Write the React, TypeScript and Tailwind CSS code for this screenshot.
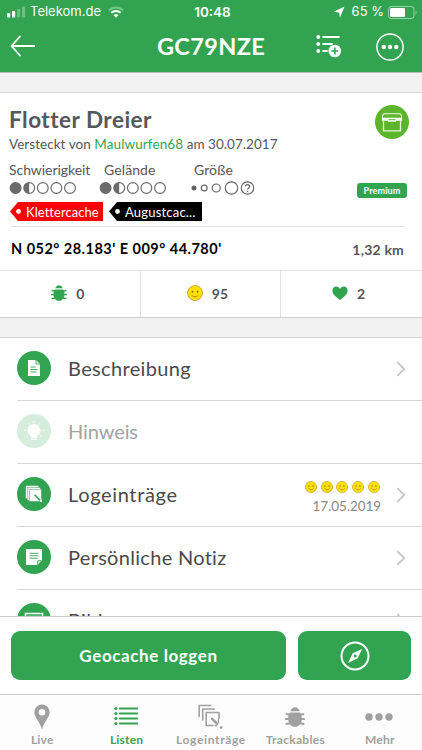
import React from 'react';

const Smiley = ({ size }: { size: number }) => (
  <svg width={size} height={size} viewBox="0 0 16 16" className="shrink-0">
    <circle cx="8" cy="8" r="7.4" fill="#ffe100" stroke="#c9a63a" strokeWidth="1" />
    <circle cx="5.4" cy="6.7" r="0.95" fill="#8a6d10" />
    <circle cx="10.6" cy="6.7" r="0.95" fill="#8a6d10" />
    <path d="M4.4 9.8c1.6 2.6 5.6 2.6 7.2 0" fill="none" stroke="#a88412" strokeWidth="0.9" />
  </svg>
);

const Bug = ({ size }: { size: number }) => (
  <svg width={size} height={size} viewBox="0 0 20 20" fill="currentColor" className="shrink-0">
    <path d="M5.4 4.2C6.2 1.6 7.8.3 10 .3s3.800 1.300 4.600 3.900z" />
    <path d="M5 5.600h10c1.400 1.500 1.800 3.400 1.800 5.900 0 5-2.800 8.300-6.800 8.300s-6.800-3.300-6.800-8.300c0-2.500.4-4.400 1.800-5.900z" />
    <path
      d="M1.500 7l2 .5h13l2-.5M.8 12h18.400M1.500 17l2-.5h13l2 .5"
      fill="none"
      stroke="currentColor"
      strokeWidth="1.900"
      strokeLinecap="round"
    />
  </svg>
);

const Rating = ({ value }: { value: number }) => (
  <svg width="68" height="14" viewBox="0 0 68 14">
    {[0, 1, 2, 3, 4].map((i) => {
      const cx = 6.6 + i * 13.6;
      return (
        <g key={i}>
          <circle
            cx={cx}
            cy="7"
            r="5.400"
            fill={value >= i + 1 ? '#6b6b6b' : 'none'}
            stroke="#6b6b6b"
            strokeWidth="1.200"
          />
          {value === i + 0.5 && <path d={`M${cx} 1.600a5.400 5.400 0 0 0 0 10.800z`} fill="#6b6b6b" />}
        </g>
      );
    })}
  </svg>
);

const Tag = ({ color, children }: { color: string; children: React.ReactNode }) => (
  <div className="relative flex h-[19px] w-[93px] items-center">
    <svg width="93" height="19" viewBox="0 0 93 19" className="absolute inset-0">
      <path d="M0 9.500L8 0H93V19H8z" fill={color} />
      <circle cx="8.500" cy="9.500" r="2.400" fill="#fff" />
    </svg>
    {children}
  </div>
);

const Chevron = () => (
  <svg width="10" height="16" viewBox="0 0 10 16" className="shrink-0">
    <path d="M1.200 1.200L8.200 8l-7 6.800" fill="none" stroke="#c4c4c9" strokeWidth="1.800" />
  </svg>
);

const DocIcon = () => (
  <svg width="34" height="34" viewBox="0 0 34 34">
    <path d="M11 9h8l4 4v12H11z" fill="#fff" />
    <path d="M19 9v4h4M13.500 16h5M13.500 18.500h7M13.500 21h6" fill="none" stroke="#32a451" strokeWidth="0.900" />
  </svg>
);

const BulbIcon = () => (
  <svg width="34" height="34" viewBox="0 0 34 34">
    <path
      d="M17 10.300a6.300 6.300 0 0 1 3.900 11.300c-.8.700-1 1.200-1 2.400v2h-5.800v-2c0-1.200-.2-1.700-1-2.400A6.300 6.300 0 0 1 17 10.300z"
      fill="#fff"
    />
    <path
      d="M17 7v2M11 9.200l1.300 1.500M23 9.200l-1.300 1.500M6.800 16.300h2.300M25 16.300h2.300M9.300 23l1.700-1.500M24.700 23L23 21.500"
      stroke="#fff"
      strokeWidth="0.900"
    />
    <path d="M14.600 24.500h4.800" stroke="#d5eddc" strokeWidth="0.700" />
  </svg>
);

const LogIcon = () => (
  <svg width="34" height="34" viewBox="0 0 34 34">
    <path d="M9.500 21.500v-12h12M11.300 23.300v-12h12" fill="none" stroke="#fff" strokeWidth="1.300" />
    <path d="M12.500 12.500h11.700v8l.6 4-3.800-.3h-8.500z" fill="#fff" />
    <path d="M17.500 17.700l5.700 5.700" stroke="#32a451" strokeWidth="1.600" />
    <path d="M23.500 23.400l1.200 1.200" stroke="#fff" strokeWidth="1.800" />
  </svg>
);

const NoteIcon = () => (
  <svg width="34" height="34" viewBox="0 0 34 34">
    <path d="M9 9h16v11.200L20.300 25H9z" fill="#fff" />
    <path d="M12.500 13.300h9M12.500 15.800h9M12.500 18.300h8" stroke="#32a451" strokeWidth="0.900" />
    <path d="M20.700 24.500v-3.700h4" fill="none" stroke="#32a451" strokeWidth="1" />
  </svg>
);

const PictureIcon = () => (
  <svg width="34" height="34" viewBox="0 0 34 34">
    <rect x="8.500" y="10.500" width="17" height="13" fill="none" stroke="#fff" strokeWidth="1.500" />
    <rect x="10.800" y="12.800" width="12.400" height="8.400" fill="#fff" />
  </svg>
);

const Row = ({
  icon,
  label,
  labelClass,
  disabled,
  children,
}: {
  icon: React.ReactNode;
  label: string;
  labelClass: string;
  disabled?: boolean;
  children?: React.ReactNode;
}) => (
  <div className="ml-[17px] flex h-[63px] shrink-0 items-center border-b border-[#d6d6d6] pr-4">
    <div
      className={`mb-0.5 h-[34px] w-[34px] shrink-0 overflow-hidden rounded-full ${disabled ? 'bg-[#d5eddc]' : 'bg-[#32a451]'}`}
    >
      {icon}
    </div>
    <span
      className={`mb-[3px] ml-[17px] flex-1 whitespace-nowrap text-[20px] leading-6 ${disabled ? 'text-[#a3a3a3]' : 'text-[#4a4a4a]'} ${labelClass}`}
    >
      {label}
    </span>
    {children}
  </div>
);

const Header = () => (
  <header className="h-[73px] shrink-0 border-b border-[#b5b8b5] bg-[#32a451] text-white">
    <div className="grid h-6 grid-cols-3 items-center font-['Inter'] text-[13px]">
      <div className="flex items-center pl-[7px]">
        <svg width="19" height="12" viewBox="0 0 19 12" fill="#fff">
          <rect x="0" y="7" width="3.200" height="4.500" rx="0.800" />
          <rect x="5" y="5" width="3.200" height="6.500" rx="0.800" />
          <rect x="10" y="3" width="3.200" height="8.500" rx="0.800" opacity="0.300" />
          <rect x="15" y="0.500" width="3.200" height="11" rx="0.800" opacity="0.300" />
        </svg>
        <span className="ml-1 w-[72px] whitespace-nowrap">Telekom.de</span>
        <svg width="16" height="12" viewBox="0 0 16 12" className="ml-1.5" fill="none" stroke="#fff">
          <path d="M1 4.400a10 10 0 0 1 14 0" strokeWidth="1.900" opacity="0.350" />
          <path d="M3.300 6.900a6.700 6.700 0 0 1 9.400 0" strokeWidth="1.900" />
          <path d="M8 11.700L5.500 9.200a3.600 3.600 0 0 1 5 0z" fill="#fff" stroke="none" />
        </svg>
      </div>
      <span className="pl-[3px] text-center text-[13.5px] font-semibold">10:48</span>
      <div className="flex items-center justify-end pr-[5px]">
        <svg width="12" height="12" viewBox="0 0 12 12">
          <path d="M11.500.5L7 11.500l-.9-5.100L.6 5.700z" fill="#fff" />
        </svg>
        <span className="ml-[7px] whitespace-nowrap">65 %</span>
        <svg width="29" height="13" viewBox="0 0 29 13" className="ml-1">
          <rect x="0.500" y="0.500" width="25.500" height="12" rx="2.800" fill="none" stroke="#fff" opacity="0.500" />
          <rect x="2" y="2" width="15" height="9" rx="1.300" fill="#fff" />
          <path d="M27.600 4.500c1.300.6 1.300 3.400 0 4z" fill="#fff" opacity="0.500" />
        </svg>
      </div>
    </div>
    <div className="grid h-[45px] grid-cols-[1fr_auto_1fr] items-center">
      <svg width="25" height="22" viewBox="0 0 25 22" className="mb-0.5 ml-[10px]">
        <path
          d="M10 1.500L1.500 11l8.500 9.500M1.500 11h23"
          fill="none"
          stroke="#fff"
          strokeWidth="1.800"
          strokeLinejoin="round"
          strokeLinecap="round"
        />
      </svg>
      <h1 className="mb-0.5 whitespace-nowrap text-[23.5px] font-bold leading-7 tracking-[0.35px]">GC79NZE</h1>
      <div className="flex items-center justify-end gap-[34px] pr-[18px]">
        <svg width="26" height="24" viewBox="0 0 26 24">
          <g fill="#fff">
            <circle cx="2.300" cy="2" r="1.900" />
            <circle cx="2.300" cy="9" r="1.900" />
            <circle cx="2.300" cy="16" r="1.900" />
          </g>
          <path d="M7 2h16M7 9h9M7 16h4" stroke="#fff" strokeWidth="1.800" strokeLinecap="round" />
          <circle cx="18.800" cy="16" r="6.300" fill="#fff" />
          <path d="M15.400 16h6.800M18.800 12.600v6.800" stroke="#32a451" strokeWidth="1.700" />
        </svg>
        <svg width="28" height="28" viewBox="0 0 28 28" fill="#fff">
          <circle cx="14" cy="14" r="13.100" fill="none" stroke="#fff" strokeWidth="1.500" />
          <circle cx="7.800" cy="14" r="2.200" />
          <circle cx="14" cy="14" r="2.200" />
          <circle cx="20.200" cy="14" r="2.200" />
        </svg>
      </div>
    </div>
  </header>
);

const CacheInfo = () => (
  <section className="h-[225px] shrink-0 border-b border-[#cfcfcf] bg-white text-[#565656]">
    <div className="flex h-[133px] justify-between pl-[9px] pr-[15px] pt-[13px]">
      <div>
        <h2 className="whitespace-nowrap text-[22.5px] font-bold leading-7 tracking-[0.5px] text-[#555959]">
          Flotter Dreier
        </h2>
        <p className="mt-[2px] whitespace-nowrap text-[13.5px] leading-4 tracking-[0.05px]">
          Versteckt von <span className="tracking-[0.1px] text-[#32a451]">Maulwurfen68</span> am 30.07.2017
        </p>
        <div className="mt-[10px] flex text-[14px] leading-4">
          <div className="w-[90px]">
            <div className="mb-[3px] tracking-[-0.05px]">Schwierigkeit</div>
            <Rating value={1.5} />
          </div>
          <div className="w-[95px]">
            <div className="mb-[3px] ml-[5px] tracking-[0.1px]">Gelände</div>
            <Rating value={1.5} />
          </div>
          <div>
            <div className="mb-[3px] tracking-[0.1px]">Größe</div>
            <svg
              width="66"
              height="14"
              viewBox="0 0 66 14"
              fill="none"
              stroke="#666"
              strokeWidth="1.200"
              className="-ml-[3px]"
            >
              <circle cx="3" cy="7" r="1.900" fill="#5b5b5b" />
              <circle cx="13.200" cy="7" r="2.900" />
              <circle cx="25.200" cy="7" r="4" />
              <circle cx="40.500" cy="7" r="6.200" />
              <circle cx="56.500" cy="7" r="6.200" />
              <path d="M54.300 5.400c.2-2.500 4.400-2.400 4.400.1 0 1.600-2.100 1.500-2.100 3.100M56.600 9.800v1.200" />
            </svg>
          </div>
        </div>
        <div className="mt-[7px] ml-px flex gap-[6px] text-[13px] leading-4 text-white">
          <Tag color="#ff0000">
            <span className="relative pl-4 tracking-[0.05px]">Klettercache</span>
          </Tag>
          <Tag color="#000000">
            <span className="relative pl-4 tracking-[0.2px]">Augustcac...</span>
          </Tag>
        </div>
      </div>
      <div className="flex flex-col items-end">
        <svg width="34" height="34" viewBox="0 0 34 34" className="-mr-[1.5px] -mt-px">
          <circle cx="17" cy="17" r="17" fill="#5cb52b" />
          <path d="M8.500 15.500v10.300h17V15.500" fill="none" stroke="#e6f5dc" strokeWidth="1.300" />
          <path
            d="M9.800 8.800h14.400c1.500 0 2.400 1.500 2.400 3.700v2.800H7.400v-2.800c0-2.200.9-3.700 2.400-3.700z"
            fill="none"
            stroke="#f2faec"
            strokeWidth="1.100"
          />
          <path d="M7.400 12.700h19.200v2.600H7.400z" fill="#f2faec" />
          <path d="M13 13.500h8v3.300h-8z" fill="#f2faec" />
          <path d="M13.500 14.600h7" stroke="#5cb52b" strokeWidth="0.900" />
        </svg>
        <div className="mt-[44px] flex h-[15px] w-[50px] items-center justify-center rounded-[3px] bg-[#32a451] text-[9px] font-bold tracking-[0.15px] text-white">
          Premium
        </div>
      </div>
    </div>
    <div className="ml-[11px] mr-[18px] flex h-[44px] items-center justify-between border-t border-[#e4e4e4] pt-px font-bold">
      <span className="whitespace-nowrap text-[14.5px] tracking-[0.48px] text-black">
        N 052° 28.183' E 009° 44.780'
      </span>
      <span className="whitespace-nowrap text-[14px] tracking-[0.2px]">1,32 km</span>
    </div>
    <div className="grid h-[47px] grid-cols-3 divide-x divide-[#e0e0e0] border-t border-[#e4e4e4] text-[14px] font-bold">
      <div className="flex items-center justify-center gap-[9px] pb-0.5 pr-1 text-[#32a451]">
        <Bug size={16} />
        <span className="text-[#565656]">0</span>
      </div>
      <div className="flex items-center justify-center gap-[9px] pb-0.5 pr-[6px]">
        <Smiley size={16} />
        <span>95</span>
      </div>
      <div className="flex items-center justify-center gap-[9px] pb-0.5 pr-[6px]">
        <svg width="16" height="14" viewBox="0 0 16 14">
          <path
            d="M8 14C5 11.500.4 8.500.4 4.400.4 2 2.200.5 4.200.5 6 .5 7.300 1.500 8 2.900 8.700 1.500 10 .5 11.800.5c2 0 3.800 1.500 3.800 3.900C15.600 8.500 11 11.500 8 14z"
            fill="#32a451"
          />
        </svg>
        <span>2</span>
      </div>
    </div>
  </section>
);

const TabBar = () => (
  <nav className="grid h-[56px] shrink-0 grid-cols-5 border-t border-[#cccccc] bg-[#fdfdfd] text-[12px] font-bold leading-[14px] text-[#a0a0a0]">
    <div className="flex flex-col items-center">
      <div className="flex h-[38px] items-center pt-[5px]">
        <svg width="16" height="26" viewBox="0 0 16 26">
          <path
            d="M8 .5a7.700 7.700 0 0 1 7.700 7.700C15.700 13 10 18 8 25.500 6 18 .3 13 .3 8.200A7.700 7.700 0 0 1 8 .5zM8 5a3.300 3.300 0 1 0 0 6.600A3.300 3.300 0 0 0 8 5z"
            fill="currentColor"
          />
        </svg>
      </div>
      <span className="tracking-[0.2px]">Live</span>
    </div>
    <div className="flex flex-col items-center text-[#32a451]">
      <div className="flex h-[38px] items-center pr-px pt-1">
        <svg width="24" height="20" viewBox="0 0 24 20">
          {[2.5, 7.5, 12.5, 17.5].map((y) => (
            <g key={y} fill="currentColor">
              <circle cx="1.900" cy={y} r="1.600" />
              <rect x="5" y={y - 1} width="19" height="2" rx="0.700" />
            </g>
          ))}
        </svg>
      </div>
      <span className="tracking-[0.2px]">Listen</span>
    </div>
    <div className="flex flex-col items-center">
      <div className="flex h-[38px] items-center pt-[5px]">
        <svg
          width="25"
          height="25"
          viewBox="0 0 25 25"
          fill="none"
          stroke="currentColor"
          strokeWidth="1.600"
          strokeLinecap="round"
          strokeLinejoin="round"
        >
          <path d="M1.200 12.500V1.500h11.500M4.700 16V5h11.500" />
          <path d="M21 14.500V8.500H8.200v13h7" />
          <path d="M14.200 14.800l5 5" strokeWidth="2.600" />
          <path d="M20.500 18.500v-3M17 21.500h1.500" strokeWidth="1.400" />
          <path d="M23 23.300l.2.200" strokeWidth="2.600" />
        </svg>
      </div>
      <span className="whitespace-nowrap tracking-[0.65px]">Logeinträge</span>
    </div>
    <div className="flex flex-col items-center">
      <div className="flex h-[38px] items-center pt-[6px]">
        <Bug size={20} />
      </div>
      <span className="tracking-[0.3px]">Trackables</span>
    </div>
    <div className="flex flex-col items-center">
      <div className="flex h-[38px] items-center pr-px pt-[5px]">
        <svg width="28" height="8" viewBox="0 0 28 8" fill="currentColor">
          <circle cx="4" cy="4" r="3.700" />
          <circle cx="14" cy="4" r="3.700" />
          <circle cx="24" cy="4" r="3.700" />
        </svg>
      </div>
      <span className="tracking-[0.2px]">Mehr</span>
    </div>
  </nav>
);

export default function App() {
  return (
    <div className="flex h-[750px] w-[422px] flex-col overflow-hidden bg-white font-['Lato',sans-serif]">
      <Header />
      <div className="h-5 shrink-0 border-b border-[#d4d4d4] bg-[#f2f2f2]" />
      <CacheInfo />
      <div className="h-5 shrink-0 border-b border-[#d4d4d4] bg-[#f2f2f2]" />
      <main className="flex h-[278px] shrink-0 flex-col overflow-hidden bg-white">
        <Row icon={<DocIcon />} label="Beschreibung" labelClass="tracking-[0.35px]">
          <Chevron />
        </Row>
        <Row icon={<BulbIcon />} label="Hinweis" labelClass="tracking-[-0.1px]" disabled />
        <Row icon={<LogIcon />} label="Logeinträge" labelClass="tracking-[0.65px]">
          <div className="mr-[15px] flex flex-col items-end pt-1">
            <div className="flex gap-[3.8px] pr-px">
              {[0, 1, 2, 3, 4].map((i) => (
                <Smiley key={i} size={12} />
              ))}
            </div>
            <span className="mt-[5px] text-[13.5px] leading-4 tracking-[-0.05px] text-[#8a8a8a]">17.05.2019</span>
          </div>
          <Chevron />
        </Row>
        <Row icon={<NoteIcon />} label="Persönliche Notiz" labelClass="tracking-[0.3px]">
          <Chevron />
        </Row>
        <Row icon={<PictureIcon />} label="Bilder" labelClass="tracking-[0.35px]">
          <span className="mb-0.5 mr-[15px] text-[14px] text-[#8a8a8a]">1</span>
          <Chevron />
        </Row>
      </main>
      <div className="flex h-[78px] shrink-0 gap-3 border-t border-[#cccccc] bg-white px-[11px] pt-[14px]">
        <button className="h-[49px] w-[275px] rounded-[9px] bg-[#32a451] text-[17px] font-bold tracking-[0.6px] text-white">
          Geocache loggen
        </button>
        <button className="flex h-[49px] flex-1 items-center justify-center rounded-[9px] bg-[#32a451]">
          <svg width="30" height="30" viewBox="0 0 30 30">
            <circle cx="15" cy="15" r="13.500" fill="none" stroke="#fff" strokeWidth="2" />
            <path d="M22 8l-4.300 9.300L8 22l4.700-9.700z" fill="#fff" />
            <circle cx="15.100" cy="14.900" r="1.500" fill="#32a451" />
          </svg>
        </button>
      </div>
      <TabBar />
    </div>
  );
}
